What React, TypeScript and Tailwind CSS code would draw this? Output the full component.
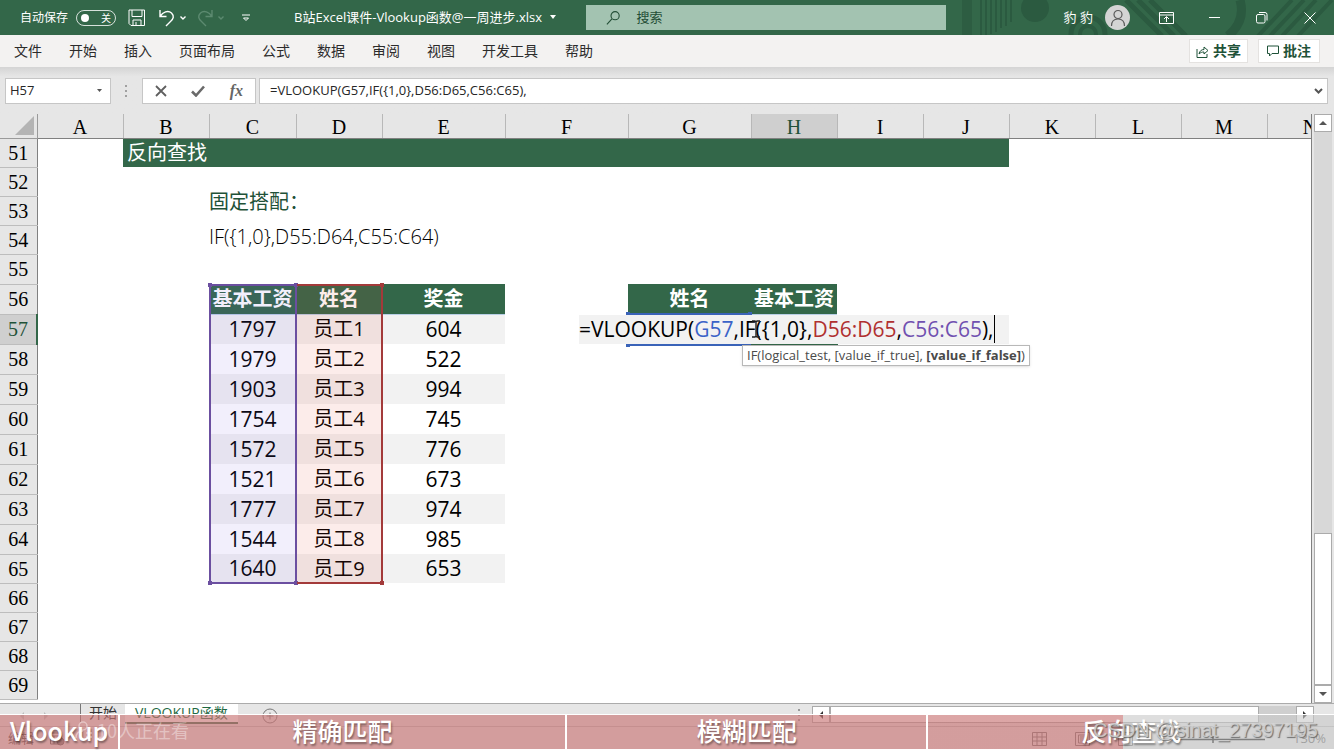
import { useState, type ReactNode } from 'react'

const MENU = ['文件', '开始', '插入', '页面布局', '公式', '数据', '审阅', '视图', '开发工具', '帮助']

const COLS = [
  { name: 'A', width: 'w-[86px]' },
  { name: 'B', width: 'w-[86px]' },
  { name: 'C', width: 'w-[87px]' },
  { name: 'D', width: 'w-[86px]' },
  { name: 'E', width: 'w-[123px]' },
  { name: 'F', width: 'w-[123px]' },
  { name: 'G', width: 'w-[123px]' },
  { name: 'H', width: 'w-[86px]' },
  { name: 'I', width: 'w-[86px]' },
  { name: 'J', width: 'w-[86px]' },
  { name: 'K', width: 'w-[86px]' },
  { name: 'L', width: 'w-[86px]' },
  { name: 'M', width: 'w-[86px]' },
  { name: 'N', width: 'w-[86px]' },
]

const STAFF = [
  { salary: 1797, name: '员工1', bonus: 604 },
  { salary: 1979, name: '员工2', bonus: 522 },
  { salary: 1903, name: '员工3', bonus: 994 },
  { salary: 1754, name: '员工4', bonus: 745 },
  { salary: 1572, name: '员工5', bonus: 776 },
  { salary: 1521, name: '员工6', bonus: 673 },
  { salary: 1777, name: '员工7', bonus: 974 },
  { salary: 1544, name: '员工8', bonus: 985 },
  { salary: 1640, name: '员工9', bonus: 653 },
]

const ROWS = Array.from({ length: 19 }, (_, i) => 51 + i)

const CHAPTERS = [
  { label: 'Vlookup', box: 'w-[9%]' },
  { label: '精确匹配', box: 'w-[33.5%]' },
  { label: '模糊匹配', box: 'w-[27.1%]' },
]

function TitleButton({ label, children }: { label: string; children: ReactNode }) {
  return (
    <button aria-label={label} className="flex w-12 h-full items-center justify-center text-white">
      {children}
    </button>
  )
}

function TitleBar() {
  const [autoSave, setAutoSave] = useState(false)
  return (
    <header className="relative flex h-[35px] shrink-0 items-center bg-[#336749] text-xs text-white overflow-hidden">
      {/* Узор на фоне заголовка */}
      <svg className="absolute right-0 top-0" width="394" height="36" viewBox="0 0 394 36" fill="none" stroke="#2b5a40">
        <path d="M27 0v36" stroke="#2d5d42" strokeWidth="10" />
        <path d="M41 0v36M46 0v36M51 0v34M56 0v32M61 0v28M66 0v26M71 0v22" strokeWidth="2" />
        <circle cx="95" cy="8" r="14" fill="#2b5a40" stroke="none" />
        <circle cx="148" cy="34" r="17" strokeWidth="5" />
        <circle cx="148" cy="34" r="8" strokeWidth="4" />
        <path d="M186 0l36 36M198 0l36 36M210 0l36 36" strokeWidth="5" />
        <path d="M300 0c4 14 0 26-12 36" strokeWidth="9" />
        <path d="M318 36l34-36M330 36l34-36M342 36l34-36M358 36l34-36" strokeWidth="4" />
      </svg>
      <div className="relative flex h-full flex-1 items-center">
        <label className="flex items-center gap-2 pl-5">
          自动保存
          <input type="checkbox" className="sr-only" checked={autoSave} onChange={e => setAutoSave(e.target.checked)} />
          <span className="flex h-4 w-10 items-center justify-between rounded-full border border-white/80 px-1 text-[10px] leading-none">
            <span className="size-2 rounded-full bg-white" />
            关
          </span>
        </label>
        <button aria-label="保存" className="ml-3">
          <svg width="18" height="18" viewBox="0 0 18 18" fill="none" stroke="#fff">
            <path d="M1 1h15.500v15.500H3L1 14.500zM4 1v6.500h10V1M5 16.500V11h8v5.500M8 13v3" />
          </svg>
        </button>
        <button aria-label="撤消" className="ml-3 flex items-center">
          <svg width="30" height="18" viewBox="0 0 30 18" fill="none" stroke="#fff" strokeWidth="1.400">
            <path d="M2 1v6.500h6.500M2 7.500C5 3 10 1 13.500 4c3 3 2 6-1 8.500L8 17" />
            <path d="M22.500 7.500l2.500 2.500 2.500-2.500" />
          </svg>
        </button>
        <button aria-label="恢复" className="ml-2 flex items-center">
          <svg width="30" height="18" viewBox="0 0 30 18" fill="none" stroke="#5c8a70" strokeWidth="1.400">
            <path d="M16 1v6.500H9.500M16 7.500C13 3 8 1 4.500 4c-3 3-2 6 1 8.500L10 17" />
            <path d="M22.500 7.500l2.500 2.500 2.500-2.500" />
          </svg>
        </button>
        <button aria-label="自定义快速访问工具栏" className="ml-4">
          <svg width="8" height="8" viewBox="0 0 8 8" fill="none" stroke="#fff">
            <path d="M0 1h8" />
            <path d="M1.500 4l2.500 2.500L6.500 4z" />
          </svg>
        </button>
        <h1 className="ml-11 flex items-center gap-2 whitespace-nowrap text-[13px]">
          B站Excel课件-Vlookup函数@一周进步.xlsx
          <svg width="6" height="4" viewBox="0 0 6 4"><path d="M0 0h6L3 4z" fill="#fff" /></svg>
        </h1>
      </div>
      <label className="relative flex h-[25px] w-[27%] items-center gap-4 bg-[#a3c3b1] pl-5">
        <svg width="16" height="16" viewBox="0 0 16 16" fill="none" stroke="#234e36" strokeWidth="1.200">
          <circle cx="10" cy="5.500" r="4.500" />
          <path d="M6.500 9L1 15" />
        </svg>
        <input aria-label="搜索" placeholder="搜索" className="w-full bg-transparent text-[13px] outline-none placeholder:text-[#234e36]" />
      </label>
      <div className="relative flex h-full w-[388px] items-center justify-end">
        <span className="text-[13px]">豹 豹</span>
        <span className="mx-3 flex size-[25px] items-center justify-center rounded-full bg-[#d4d4d4]">
          <svg width="18" height="18" viewBox="0 0 18 18" fill="none" stroke="#5a5a5a" strokeWidth="1.200">
            <circle cx="9" cy="5.500" r="4" />
            <path d="M2.500 17c0-4.500 2.500-7 6.500-7s6.500 2.500 6.500 7" />
          </svg>
        </span>
        <TitleButton label="功能区显示选项">
          <svg width="15" height="12" viewBox="0 0 15 12" fill="none" stroke="#fff">
            <path d="M.5.5h14v11H.5zM.5 3h14M7.500 10V5M5 7l2.500-2.500L10 7" />
          </svg>
        </TitleButton>
        <TitleButton label="最小化">
          <svg width="11" height="2" viewBox="0 0 11 2"><path d="M0 .5h11" stroke="#fff" /></svg>
        </TitleButton>
        <TitleButton label="还原">
          <svg width="12" height="12" viewBox="0 0 12 12" fill="none" stroke="#fff">
            <rect x=".5" y="2.500" width="8.500" height="8.500" rx="1.500" />
            <path d="M3 .5h6a2 2 0 0 1 2 2v6" />
          </svg>
        </TitleButton>
        <TitleButton label="关闭">
          <svg width="12" height="12" viewBox="0 0 12 12" stroke="#fff"><path d="M.5.5l11 11M11.500.5l-11 11" /></svg>
        </TitleButton>
      </div>
    </header>
  )
}

function MenuBar() {
  return (
    <nav className="flex h-8 shrink-0 items-center justify-between bg-[#f3f2f1] px-3.5 text-sm text-[#2b2b2b]">
      <div className="flex gap-[27px]">
        {MENU.map(m => (
          <button key={m} className="whitespace-nowrap">{m}</button>
        ))}
      </div>
      <div className="flex gap-2.5 font-bold text-[#1f5238]">
        <button className="flex h-6 items-center gap-1 border border-[#e4e2e0] bg-white px-1.5">
          <svg width="13" height="13" viewBox="0 0 13 13" fill="none" stroke="currentColor">
            <path d="M1 4v8.500h10V9M3 9c.5-3 2.500-4.500 5-4.500V2l4 3.500L8 9V7C6 7 4.500 7.500 3 9z" />
          </svg>
          共享
        </button>
        <button className="flex h-6 items-center gap-1 border border-[#e4e2e0] bg-white px-2">
          <svg width="12" height="12" viewBox="0 0 12 12" fill="none" stroke="currentColor">
            <path d="M.5 1h11v7.500H5L2.500 11V8.500h-2z" />
          </svg>
          批注
        </button>
      </div>
    </nav>
  )
}

function FormulaBar() {
  const [ref, setRef] = useState('H57')
  const [formula, setFormula] = useState('=VLOOKUP(G57,IF({1,0},D56:D65,C56:C65),')
  return (
    <div className="flex h-[47px] shrink-0 items-center bg-linear-to-b from-[#d4d4d4] via-[#e6e6e6] via-20% to-[#e6e6e6] pl-[5px] pr-1.5 text-[#262626]">
      <div className="flex h-[26px] w-[106px] items-center border border-[#c6c6c6] bg-white">
        <input aria-label="名称框" value={ref} onChange={e => setRef(e.target.value)} className="w-full min-w-0 px-1 text-[13px] outline-none" />
        <button aria-label="名称列表" className="px-2">
          <svg width="5" height="3" viewBox="0 0 5 3"><path d="M0 0h5L2.500 3z" fill="#555" /></svg>
        </button>
      </div>
      <svg className="mx-3.5" width="3" height="12" viewBox="0 0 3 12" fill="#a0a0a0">
        <path d="M0 0h2v2H0zM0 5h2v2H0zM0 10h2v2H0z" />
      </svg>
      <div className="flex h-[26px] w-[114px] items-center justify-between border border-[#c6c6c6] bg-white px-3">
        <button aria-label="取消">
          <svg width="12" height="12" viewBox="0 0 12 12" stroke="#5f5f5f" strokeWidth="1.800"><path d="M1 1l10 10M11 1L1 11" /></svg>
        </button>
        <button aria-label="输入">
          <svg width="14" height="12" viewBox="0 0 14 12" fill="none" stroke="#6a6a6a" strokeWidth="2.600"><path d="M1 6.500l4 4L13 1.500" /></svg>
        </button>
        <button className="font-['Liberation_Serif',serif] text-base font-bold italic leading-none text-[#666]">fx</button>
      </div>
      <div className="ml-[3px] flex h-[26px] flex-1 items-center border border-[#c6c6c6] bg-white">
        <input aria-label="编辑栏" value={formula} onChange={e => setFormula(e.target.value)} className="w-full px-2.5 text-[13px] outline-none" />
        <button aria-label="展开编辑栏" className="px-1">
          <svg width="9" height="6" viewBox="0 0 9 6" fill="none" stroke="#555" strokeWidth="2"><path d="M1 1l3.500 3.500L8 1" /></svg>
        </button>
      </div>
    </div>
  )
}

function RowCells({ row }: { row: number }) {
  if (row === 51) {
    return (
      <>
        <td />
        <td colSpan={9} className="bg-[#336749] pl-1 text-left text-white">反向查找</td>
        <td colSpan={4} />
      </>
    )
  }
  if (row === 56) {
    const head = 'border-b border-[#b9cfe6] bg-[#336749] font-bold text-white'
    return (
      <>
        <td colSpan={2} />
        <td className={head}>基本工资</td>
        <td className={head}>姓名</td>
        <td className={head}>奖金</td>
        <td />
        <td className={head}>姓名</td>
        <td className={head}>基本工资</td>
        <td colSpan={6} />
      </>
    )
  }
  const person = STAFF[row - 57]
  if (!person) return <td colSpan={14} />
  const stripe = row % 2 ? 'bg-[#f2f2f2]' : ''
  return (
    <>
      <td colSpan={2} />
      <td className={`text-[21px] ${stripe}`}>{person.salary}</td>
      <td className={stripe}>{person.name}</td>
      <td className={`text-[21px] ${stripe}`}>{person.bonus}</td>
      <td colSpan={9} />
    </>
  )
}

function Handles({ color }: { color: string }) {
  return (
    <>
      <i className={`absolute -left-[3px] -top-[3px] size-1 ${color}`} />
      <i className={`absolute -right-[3px] -top-[3px] size-1 ${color}`} />
      <i className={`absolute -bottom-[3px] -left-[3px] size-1 ${color}`} />
      <i className={`absolute -bottom-[3px] -right-[3px] size-1 ${color}`} />
    </>
  )
}

function Grid() {
  return (
    <div className="relative min-w-0 flex-1 overflow-hidden border-r border-[#808080] bg-white">
      <table className="w-[1329px] table-fixed border-collapse text-center text-xl leading-none text-black">
        <colgroup>
          <col className="w-[37px]" />
          {COLS.map(c => <col key={c.name} className={c.width} />)}
        </colgroup>
        <thead className="font-['Liberation_Serif',serif]">
          <tr className="h-6 bg-[#e6e6e6]">
            <th className="border-b border-r border-[#9a9a9a]">
              <svg className="ml-auto mr-0.5" width="20" height="20" viewBox="0 0 20 20"><path d="M19 0v19H0z" fill="#b4b4b4" /></svg>
            </th>
            {COLS.map(c => (
              <th
                key={c.name}
                className={`border-b border-r border-b-[#808080] border-r-[#b8b8b8] pt-[3px] font-normal ${c.name === 'H' ? 'bg-[#cfcfcf] text-[#1f5238]' : ''}`}
              >
                {c.name}
              </th>
            ))}
          </tr>
        </thead>
        <tbody>
          {ROWS.map(row => (
            <tr key={row} className={row >= 55 && row <= 64 ? 'h-[30px]' : 'h-[29px]'}>
              <th
                className={`border-b border-r border-b-[#bdbdbd] font-['Liberation_Serif',serif] font-normal ${row === 57 ? 'border-r-2 border-r-[#336749] bg-[#cfcfcf] text-[#1f5238]' : 'border-r-[#808080] bg-[#e6e6e6]'}`}
              >
                {row}
              </th>
              <RowCells row={row} />
            </tr>
          ))}
        </tbody>
      </table>

      {/* Текстовое поле поверх ячеек */}
      <div className="absolute left-[209px] top-[70px] text-xl leading-[35px] font-light">
        <p className="text-[#1f5238] font-normal">固定搭配：</p>
        <p>{'IF({1,0},D55:D64,C55:C64)'}</p>
      </div>

      {/* Диапазоны формулы */}
      <div className="absolute left-[209px] top-[170px] h-[300px] w-[88px] border-2 border-[#6b4fa0] bg-[#8060e0]/10">
        <Handles color="bg-[#6b4fa0]" />
      </div>
      <div className="absolute left-[297px] top-[170px] h-[300px] w-[86px] border-2 border-l-0 border-[#a33a3a] bg-[#e04030]/10">
        <i className="absolute -right-[3px] -top-[3px] size-1 bg-[#a33a3a]" />
        <i className="absolute -bottom-[3px] -right-[3px] size-1 bg-[#a33a3a]" />
      </div>
      <div className="absolute left-[627px] top-[199px] h-[33px] w-[124px] border-2 border-[#3a63b8]">
        <Handles color="bg-[#3a63b8]" />
      </div>
      <div className="absolute left-[751px] top-[230px] h-0.5 w-[87px] bg-[#336749]" />

      <div
        role="textbox"
        aria-label="H57"
        contentEditable
        suppressContentEditableWarning
        className="absolute left-[579px] top-[201px] h-[29px] w-[430px] whitespace-nowrap bg-[#f2f2f2] text-[21px] leading-7 outline-none"
      >
        =VLOOKUP(<span className="text-[#3a63c8]">G57</span>,IF({'{1,0}'},<span className="text-[#b03030]">D56:D65</span>,
        <span className="text-[#7050b0]">C56:C65</span>),<span className="inline-block h-7 w-px bg-black align-top" />
      </div>
      <svg className="absolute left-[750px] top-[206px]" width="12" height="18" viewBox="0 0 12 18" fill="none" stroke="#222" strokeWidth="1.400">
        <path d="M2 1h3l1 1 1-1h3M6 2v14M2 17h3l1-1 1 1h3" />
      </svg>
      <div className="absolute left-[742px] top-[231px] whitespace-nowrap border border-[#b8b8b8] bg-white px-1 text-[13px] leading-[19px] text-[#4a4a4a] shadow-sm">
        IF(logical_test, [value_if_true], <b>[value_if_false]</b>)
      </div>
    </div>
  )
}

function VerticalScroll() {
  const button = 'flex h-[18px] shrink-0 items-center justify-center border border-[#ababab] bg-white'
  return (
    <div className="flex w-[22px] shrink-0 flex-col bg-[#e6e6e6] px-0.5">
      <button aria-label="向上滚动" className={button}>
        <svg width="8" height="4" viewBox="0 0 8 4"><path d="M0 4h8L4 0z" fill="#555" /></svg>
      </button>
      <div className="flex flex-1 flex-col justify-end bg-[#d8d8d8]">
        <div className="h-[152px] border border-[#ababab] bg-white" />
      </div>
      <button aria-label="向下滚动" className={button}>
        <svg width="8" height="4" viewBox="0 0 8 4"><path d="M0 0h8L4 4z" fill="#555" /></svg>
      </button>
    </div>
  )
}

function SheetTabs() {
  const button = 'flex h-[17px] w-[18px] items-center justify-center border border-[#ababab] bg-white'
  return (
    <div className="flex h-[23px] shrink-0 items-start justify-between border-t border-[#ababab] bg-[#e6e6e6] text-sm">
      <div className="flex h-full items-start">
        <svg className="ml-5 mr-8 mt-2" width="28" height="8" viewBox="0 0 28 8" fill="#bcbcbc"><path d="M4 0v8L0 4zM24 0v8l4-4z" /></svg>
        <button className="border-l border-[#777] px-2 leading-[18px] text-[#333]">开始</button>
        <button className="h-5 border-b-2 border-[#336749] bg-white px-2.5 leading-4 text-[#1f6a43]">VLOOKUP函数</button>
        <button aria-label="新工作表" className="ml-6 mt-1">
          <svg width="16" height="16" viewBox="0 0 16 16" fill="none" stroke="#777"><circle cx="8" cy="8" r="7" /><path d="M8 4.500v7M4.500 8h7" /></svg>
        </button>
      </div>
      <div className="mr-5 flex w-[38.7%] items-center pt-0.5">
        <svg className="mr-3" width="2" height="12" viewBox="0 0 2 12" fill="#999"><path d="M0 0h2v2H0zM0 5h2v2H0zM0 10h2v2H0z" /></svg>
        <button aria-label="向左滚动" className={button}>
          <svg width="4" height="8" viewBox="0 0 4 8"><path d="M4 0v8L0 4z" fill="#333" /></svg>
        </button>
        <div className="flex h-[17px] flex-1 bg-[#cfcfcf]">
          <div className="w-[92%] border border-[#ababab] bg-white" />
        </div>
        <button aria-label="向右滚动" className={button}>
          <svg width="4" height="8" viewBox="0 0 4 8"><path d="M0 0v8l4-4z" fill="#333" /></svg>
        </button>
      </div>
    </div>
  )
}

function StatusBar() {
  return (
    <footer className="flex h-6 shrink-0 items-center border-t border-[#bdbdbd] bg-[#e6e6e6] px-2 text-[13px] text-[#444]">
      <span>编辑</span>
      <svg className="ml-4" width="15" height="14" viewBox="0 0 15 14" fill="none" stroke="#555"><path d="M.5 1h11v11H.5zM.5 4h11M4 4v8" /><circle cx="10.500" cy="9.500" r="3.500" fill="#777" /></svg>
      <div className="ml-auto flex items-center gap-7">
        <svg width="15" height="14" viewBox="0 0 15 14" fill="none" stroke="#777"><path d="M.5.5h14v13H.5zM5 .5v13M10 .5v13M.5 5h14M.5 9h14" /></svg>
        <svg width="15" height="14" viewBox="0 0 15 14" fill="none" stroke="#777"><path d="M.5.5h14v13H.5zM3.500 3h8v8h-8zM5 5h5M5 7h5M5 9h5" /></svg>
        <svg width="15" height="14" viewBox="0 0 15 14" fill="none" stroke="#777"><path d="M.5.5h14v13H.5zM5 .5v8h5v-8" /></svg>
        <svg width="104" height="8" viewBox="0 0 104 8" stroke="#111"><path d="M0 4.500h104M52 1v7" strokeWidth="1.500" /></svg>
      </div>
      <span className="ml-7 text-[13px] text-[#666]">130%</span>
    </footer>
  )
}

// Полоса глав видео
function ChapterBar() {
  return (
    <div className="absolute inset-x-0 bottom-0 flex h-9 border-y border-white font-['Noto_Sans_CJK_SC',sans-serif] text-[25px] font-medium leading-none text-white [text-shadow:1px_2px_2px_#0006]">
      {CHAPTERS.map(c => (
        <div key={c.label} className={`flex items-center justify-center border-r-2 border-white bg-[#c97676]/65 pb-1 ${c.box}`}>{c.label}</div>
      ))}
      <div className="flex flex-1 items-center justify-center bg-linear-to-r from-[#c97676]/65 from-48% to-[#c8c8c8]/60 to-48% pb-1">反向查找</div>
      <div className="absolute left-[75px] top-0 flex h-full items-center gap-1 pb-1 text-lg font-normal text-white/40 [text-shadow:none]">
        <svg width="18" height="18" viewBox="0 0 18 18" fill="none" stroke="#fff6" strokeWidth="1.500"><circle cx="8" cy="5" r="4" /><path d="M1 17c0-5 3-7 7-7M11 12h6M11 16h6" /></svg>
        10人正在看
      </div>
      <div className="absolute right-4 top-0 flex h-full items-center pb-1 font-['Liberation_Sans',sans-serif] text-[20px] font-normal text-[#d0d0d0]/85 [text-shadow:1px_1px_1px_#555c]">
        CSDN @sinat_27397195
      </div>
    </div>
  )
}

export default function App() {
  return (
    <div className="relative flex h-screen flex-col overflow-hidden bg-[#e6e6e6] font-['Open_Sans','Noto_Sans_CJK_SC',sans-serif]">
      <TitleBar />
      <MenuBar />
      <FormulaBar />
      <main className="flex min-h-0 flex-1">
        <Grid />
        <VerticalScroll />
      </main>
      <SheetTabs />
      <StatusBar />
      <ChapterBar />
    </div>
  )
}
